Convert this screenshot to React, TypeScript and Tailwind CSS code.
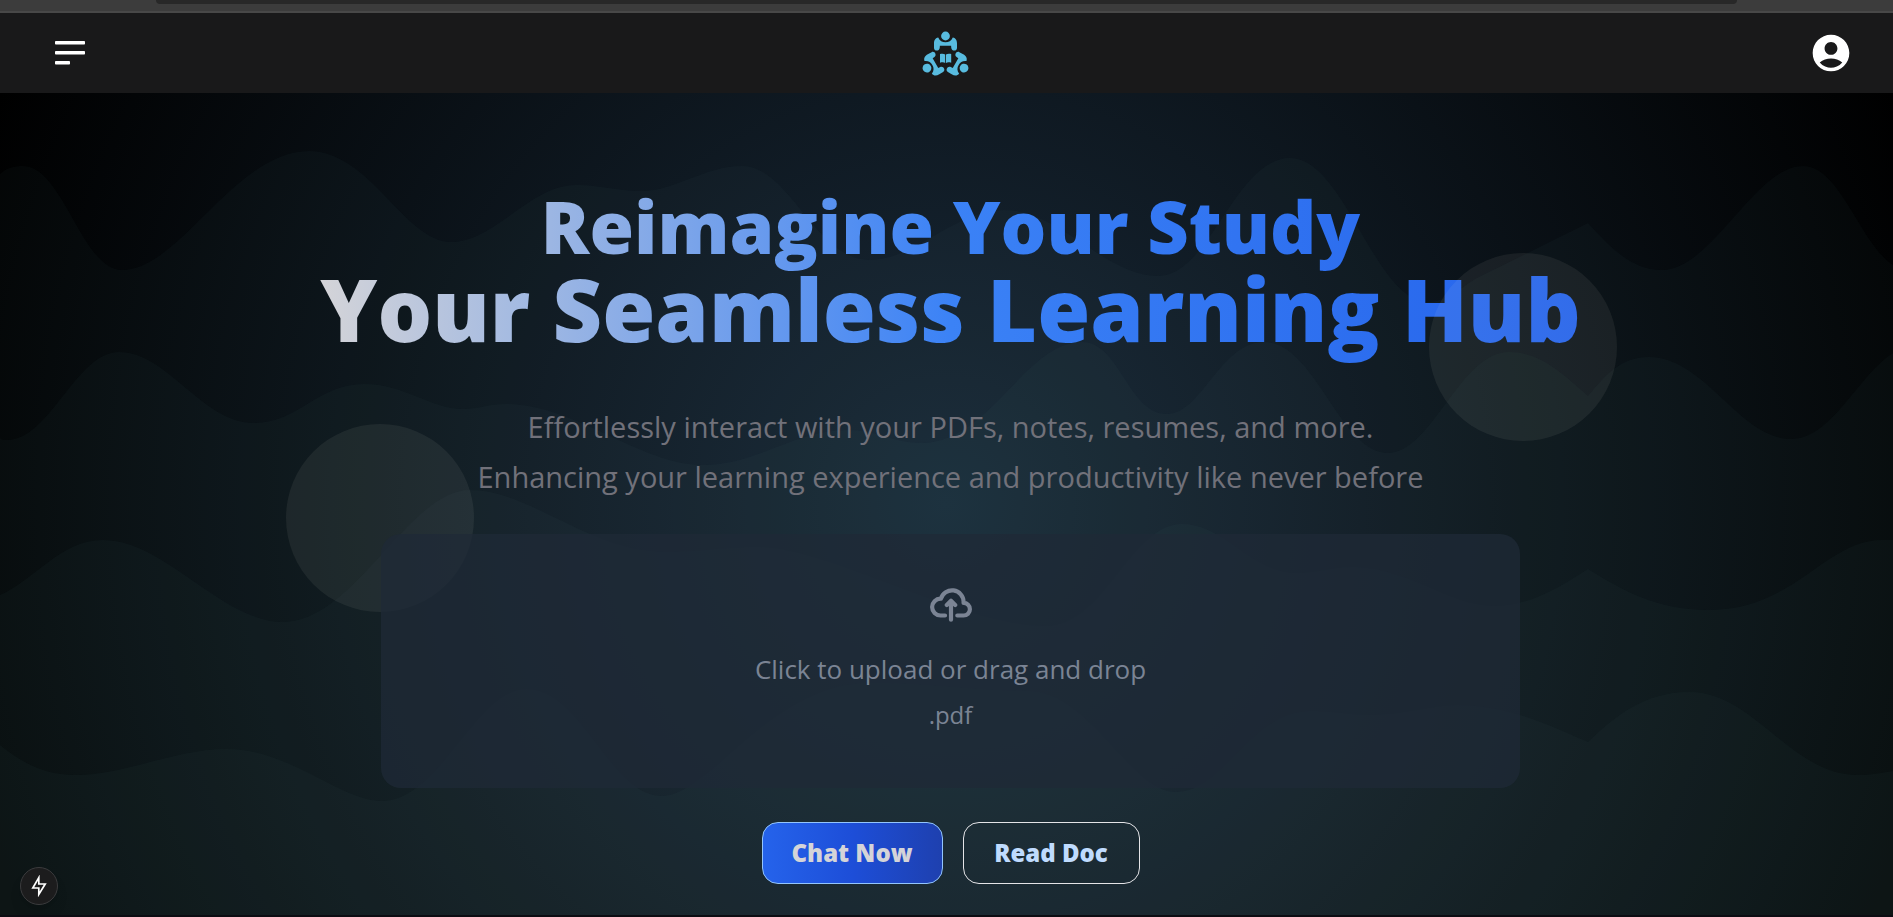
import React from "react";

const waves = [
  "M0 81 C6 75 14 73 23 73 C63 73 82 177 122 177 C180 177 235 58 309 58 C370 58 405 149 451 149 C495 149 530 92 576 92 C602 92 615 98 642 98 C675 98 705 73 742 73 C790 73 815 167 870 167 C915 167 955 117 1004 117 C1060 117 1105 183 1158 183 C1210 183 1235 65 1290 65 C1345 65 1375 209 1428 209 C1445 209 1460 196 1475 186 L1588 130 C1612 156 1632 177 1662 177 C1712 177 1755 73 1803 73 C1840 73 1860 150 1893 172 V822 H0 Z",
  "M0 345 C2 347 4 347 7 347 C50 347 76 259 119 259 C168 259 202 330 254 330 C298 330 318 291 364 291 C405 291 430 316 463 316 C480 316 488 311 506 311 C575 311 640 372 703 372 C757 372 795 337 848 337 C875 337 895 350 921 350 C990 350 1025 249 1082 249 C1120 249 1128 321 1167 321 C1202 321 1220 249 1264 249 C1315 249 1340 360 1388 360 C1432 360 1460 259 1509 259 C1540 259 1562 280 1588 303 C1605 283 1620 264 1649 264 C1705 264 1740 346 1791 346 C1832 346 1858 282 1893 260 V822 H0 Z",
  "M0 502 C35 487 60 447 103 447 C165 447 222 529 283 529 C355 529 408 397 470 397 C530 397 590 459 666 459 C700 459 720 454 757 454 C830 454 960 533 1046 533 C1105 533 1130 431 1182 431 C1225 431 1250 480 1297 480 C1320 480 1330 474 1355 474 C1405 474 1450 513 1494 513 C1530 513 1560 494 1588 476 C1620 496 1655 517 1709 517 C1795 517 1825 447 1882 447 H1893 V822 H0 Z",
  "M0 652 C20 668 42 682 76 682 C125 682 175 656 227 656 C290 656 340 708 382 708 C440 708 475 596 527 596 C582 596 610 703 662 703 C710 703 770 590 870 590 C925 590 975 598 1028 598 C1090 598 1130 699 1176 699 C1225 699 1250 618 1312 618 C1335 618 1350 622 1373 622 C1405 622 1430 612 1458 612 C1510 612 1555 635 1588 649 C1615 623 1645 599 1689 599 C1755 599 1790 682 1858 682 C1870 682 1880 680 1893 678 V822 H0 Z",
];

function WaveBackground() {
  return (
    <svg
      className="absolute inset-0 h-full w-full"
      viewBox="0 0 1893 822"
      preserveAspectRatio="none"
      aria-hidden="true"
    >
      {waves.map((d) => (
        <path key={d} d={d} fill="#588294" fillOpacity="0.045" />
      ))}
    </svg>
  );
}

function Person({ turn }: { turn: number }) {
  return (
    <g transform={`rotate(${turn} 27.5 32.4)`}>
      <circle cx="27.5" cy="11" r="4.4" />
      <path d="M20.2 12.4 C17 13 16 15.6 16 18.6 V23 C16 26.4 21.4 26.4 21.7 23 L21.9 20.8 H33.1 L33.3 23 C33.6 26.4 39 26.4 39 23 V18.6 C39 15.6 38 13 34.8 12.4 C33.2 16 30.8 17.2 27.5 17.2 C24.2 17.2 21.8 16 20.2 12.4 Z" />
    </g>
  );
}

function Logo() {
  return (
    <svg className="h-14 w-14" viewBox="0 0 56 56" fill="#58bbdf" role="img" aria-label="Study group">
      <Person turn={0} />
      <Person turn={120} />
      <Person turn={240} />
      <path d="M22 29 C24 28.4 26 28.6 27.2 29.4 V38 C26 37.2 24 37.2 22 37.8 Z M33.2 29 C31.2 28.4 29.2 28.6 28 29.4 V38 C29.2 37.2 31.2 37.2 33.2 37.8 Z" />
    </svg>
  );
}

export default function App() {
  return (
    <div className="flex min-h-screen flex-col bg-[#0c0c12] font-['Open_Sans','Noto_Sans',sans-serif]">
      <div className="h-[13px] border-b-2 border-[#484848] bg-[#3c3c3c] px-[156px]">
        <div className="h-1 rounded-b-xl bg-[#282828]" />
      </div>

      <header className="grid h-20 grid-cols-3 items-center bg-[#19191a] px-10">
        <button type="button" aria-label="Open menu" className="w-fit p-[15px] text-white">
          <svg className="h-6 w-[30px]" viewBox="0 0 30 24" fill="currentColor">
            <rect y="0" width="30" height="3.6" rx="0.8" />
            <rect y="10" width="30" height="3.6" rx="0.8" />
            <rect y="20" width="15" height="3.6" rx="0.8" />
          </svg>
        </button>
        <a href="#home" className="justify-self-center">
          <Logo />
        </a>
        <button type="button" aria-label="Account" className="justify-self-end text-white">
          <svg className="h-11 w-11" viewBox="0 0 24 24" fill="currentColor">
            <path d="M12 2C6.48 2 2 6.48 2 12s4.48 10 10 10 10-4.48 10-10S17.52 2 12 2m0 4c1.93 0 3.5 1.57 3.5 3.5S13.93 13 12 13s-3.5-1.57-3.5-3.5S10.07 6 12 6m0 14c-2.03 0-4.43-.82-6.14-2.88C7.55 15.8 9.68 15 12 15s4.45.8 6.14 2.12C16.43 19.18 14.03 20 12 20" />
          </svg>
        </button>
      </header>

      <main className="relative mb-0.5 flex grow flex-col items-center overflow-hidden bg-[radial-gradient(circle_at_50%_50%,#192a39_0%,#000000_100%)] pt-[91px] pb-6 pl-2">
        <WaveBackground />
        <div className="absolute top-[331px] left-[286px] size-[188px] rounded-full bg-[#f5f5e8]/[0.065]" />

        <h1 className="relative bg-[linear-gradient(to_right,#d4d4d8,#3b82f6,#2563eb)] bg-clip-text pb-5 text-center font-black text-transparent">
          <span className="block text-[72px] leading-[84px]">Reimagine Your Study</span>
          <span className="block text-[86px] leading-[82px]">Your Seamless Learning Hub</span>
        </h1>

        <p className="relative mt-8 text-center text-[29px] leading-[50px] font-medium text-[#71717a]">
          Effortlessly interact with your PDFs, notes, resumes, and more.
          <br />
          Enhancing your learning experience and productivity like never before
        </p>

        <label className="relative mt-8 flex w-[1139px] max-w-full cursor-pointer flex-col items-center rounded-[20px] bg-[#1f2937]/75 pt-[54px] pb-[50px] text-[#7b8494]">
          <svg
            className="h-[34px] w-[42px]"
            viewBox="0 0 20 16"
            fill="none"
            stroke="currentColor"
            strokeWidth="2"
            strokeLinecap="round"
            strokeLinejoin="round"
            aria-hidden="true"
          >
            <path d="M13 13h3a3 3 0 0 0 0-6h-.025A5.56 5.56 0 0 0 16 6.5 5.5 5.5 0 0 0 5.207 5.021C5.137 5.017 5.071 5 5 5a4 4 0 0 0 0 8h2.167M10 15V6m0 0L8 8m2-2 2 2" />
          </svg>
          <span className="mt-6 text-[26px] leading-[46px]">Click to upload or drag and drop</span>
          <span className="text-[24px] leading-[46px]">.pdf</span>
          <input type="file" accept=".pdf" className="sr-only" />
        </label>

        <div className="relative mt-[34px] flex gap-5">
          <button
            type="button"
            className="h-[62px] w-[181px] rounded-2xl border border-[#93c5fd] bg-[linear-gradient(to_right,#2563eb,#1d4ed8,#1e40af)] text-2xl font-extrabold text-[#d4d4d8]"
          >
            Chat Now
          </button>
          <button
            type="button"
            className="h-[62px] w-[177px] rounded-2xl border border-[#e4e4e7] text-2xl font-extrabold text-[#bfdbfe]"
          >
            Read Doc
          </button>
        </div>

        <div className="pointer-events-none absolute top-[160px] right-[276px] size-[188px] rounded-full bg-[#f5f5e8]/[0.065]" />
        <button
          type="button"
          aria-label="Developer tools"
          className="absolute bottom-2.5 left-5 flex size-[38px] items-center justify-center rounded-full border border-[#3b3b3d] bg-[#1c1c1d] text-white shadow-lg"
        >
          <svg className="h-[22px] w-4" viewBox="0 0 16 22" fill="none" stroke="currentColor" strokeWidth="1.7">
            <path d="M7.8 2.6 L1.8 13 H7.8 V19.4 L14.2 9 H7.8 Z" />
          </svg>
        </button>
      </main>
    </div>
  );
}
